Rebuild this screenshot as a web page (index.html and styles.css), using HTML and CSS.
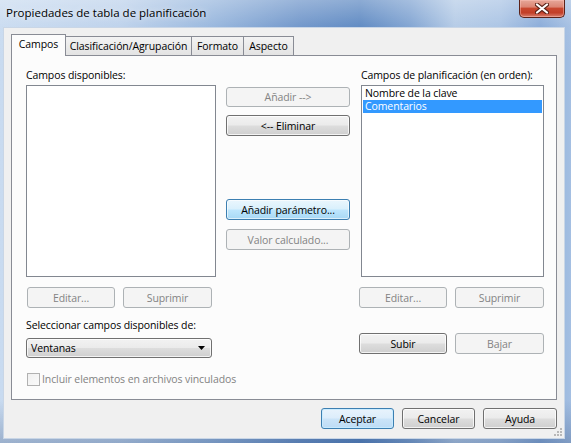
FILE: index.html
```html
<!DOCTYPE html>
<html lang="es">
<head>
<meta charset="utf-8">
<title>Propiedades de tabla de planificación</title>
<link rel="stylesheet" href="styles.css">
</head>
<body>
<div class="window">
  <div class="titlebar">
    <span class="title">Propiedades de tabla de planificación</span>
    <div class="close">
      <svg width="14" height="11" viewBox="0 0 14 11">
        <path d="M2 1.5 L12 9.5 M12 1.5 L2 9.5" stroke="#5a2218" stroke-width="4.2" stroke-linecap="round"/>
        <path d="M2 1.5 L12 9.5 M12 1.5 L2 9.5" stroke="#ffffff" stroke-width="2.2" stroke-linecap="round"/>
      </svg>
    </div>
  </div>
  <div class="client">
    <div class="tabs">
      <div class="tab tab-active tab-w1">Campos</div>
      <div class="tab tab-w2">Clasificación/Agrupación</div>
      <div class="tab tab-w3">Formato</div>
      <div class="tab tab-w4">Aspecto</div>
    </div>
    <div class="panel">
      <div class="col col-left">
        <div class="label">Campos disponibles:</div>
        <div class="listbox list-left"></div>
        <div class="btnrow">
          <button class="btn btn-a" disabled>Editar...</button>
          <button class="btn btn-b" disabled>Suprimir</button>
        </div>
        <div class="label label-gap">Seleccionar campos disponibles de:</div>
        <div class="combo">
          <span>Ventanas</span>
          <svg class="arrow" width="7" height="4" viewBox="0 0 7 4"><path d="M0 0 H7 L3.5 4 Z" fill="#000"/></svg>
        </div>
        <div class="check">
          <span class="box"></span>
          <span class="check-text">Incluir elementos en archivos vinculados</span>
        </div>
      </div>
      <div class="col col-mid">
        <button class="btn mid btn-add" disabled>Añadir --&gt;</button>
        <button class="btn mid btn-del">&lt;-- Eliminar</button>
        <button class="btn mid hot btn-param">Añadir parámetro...</button>
        <button class="btn mid btn-calc" disabled>Valor calculado...</button>
      </div>
      <div class="col col-right">
        <div class="label label-right">Campos de planificación (en orden):</div>
        <div class="listbox list-right">
          <div class="item">Nombre de la clave</div>
          <div class="item selected">Comentarios</div>
        </div>
        <div class="btnrow">
          <button class="btn btn-a0" disabled>Editar...</button>
          <button class="btn btn-b" disabled>Suprimir</button>
        </div>
        <div class="btnrow btnrow-move">
          <button class="btn btn-a0">Subir</button>
          <button class="btn btn-b" disabled>Bajar</button>
        </div>
      </div>
    </div>
    <div class="dlgbuttons">
      <button class="btn dlg default">Aceptar</button>
      <button class="btn dlg">Cancelar</button>
      <button class="btn dlg dlg-last">Ayuda</button>
    </div>
    <svg class="grip" width="9" height="9" viewBox="0 0 9 9">
      <g fill="#b8b8b8">
        <rect x="6" y="0" width="2" height="2"/>
        <rect x="3" y="3" width="2" height="2"/><rect x="6" y="3" width="2" height="2"/>
        <rect x="0" y="6" width="2" height="2"/><rect x="3" y="6" width="2" height="2"/><rect x="6" y="6" width="2" height="2"/>
      </g>
    </svg>
  </div>
</div>
</body>
</html>
```

FILE: styles.css
```css
* { box-sizing: border-box; }

html, body {
  margin: 0;
  padding: 0;
  background: #5d87be;
}

body {
  font-family: "Open Sans", "Noto Sans", "DejaVu Sans", sans-serif;
  font-size: 10.5px;
  letter-spacing: -0.1px;
  color: #000;
}

.window {
  width: 571px;
  height: 443px;
  display: flex;
  flex-direction: column;
  background:
    linear-gradient(180deg, rgba(255,255,255,0.3) 0px, rgba(255,255,255,0.05) 26px, rgba(0,0,0,0) 60px, rgba(0,0,0,0) 400px, rgba(20,50,100,0.25) 443px),
    linear-gradient(90deg, #c9dbf0 0px, #bcd1eb 120px, #97b6dd 210px, #6d94c9 300px, #5b87c1 360px, #7ea2d1 410px, #b3cae6 455px, #a9c3e4 500px, #88aad8 540px, #a4bfe2 571px);
  overflow: hidden;
}

.titlebar {
  height: 27px;
  display: flex;
  align-items: flex-start;
  flex: none;
}

.title {
  padding-left: 6px;
  line-height: 26px;
  font-size: 11.5px;
  letter-spacing: 0;
  color: #000;
  text-shadow: 0 0 6px rgba(255,255,255,0.9);
}

.close {
  margin-left: auto;
  margin-right: 6px;
  width: 46px;
  height: 18px;
  border: 1px solid #5b2219;
  border-top: none;
  border-radius: 0 0 5px 5px;
  background: linear-gradient(180deg, #e6a799 0%, #dc8675 40%, #c8472f 50%, #c23f28 75%, #d8806f 100%);
  box-shadow: inset 0 0 0 1px rgba(255,200,190,0.45);
  display: flex;
  align-items: center;
  justify-content: center;
}

.client {
  position: relative;
  flex: none;
  width: 562px;
  height: 412px;
  margin-left: 3px;
  background: #f0f0f0;
  border: 1px solid #c9d6e6;
  padding: 6px 7px 0 7px;
}

/* Tabs */
.tabs {
  display: flex;
  align-items: flex-end;
  height: 21px;
}

.tab {
  height: 19px;
  border: 1px solid #898c95;
  border-bottom: none;
  background: linear-gradient(180deg, #f3f3f3 0%, #ebebeb 50%, #e3e3e3 100%);
  text-align: center;
  line-height: 19px;
  margin-left: -1px;
  white-space: nowrap;
}

.tab-active {
  position: relative;
  z-index: 1;
  height: 22px;
  margin-bottom: -1px;
  margin-left: 0;
  background: #fcfcfc;
  line-height: 19px;
}

.tab-w1 { width: 55px; }
.tab-w2 { width: 127px; }
.tab-w3 { width: 53px; }
.tab-w4 { width: 51px; }

.panel {
  width: 546px;
  height: 345px;
  border: 1px solid #898c95;
  background: #fcfcfc;
  padding: 12px 0 0 14px;
  display: flex;
  align-items: flex-start;
}

.col {
  display: flex;
  flex-direction: column;
  align-items: flex-start;
}

.col-left { width: 190px; }
.col-mid { width: 124px; margin-left: 10px; }
.col-right { width: 185px; margin-left: 9px; }

.label {
  height: 15px;
  line-height: 15px;
  white-space: nowrap;
}

.label-gap { margin-top: 10px; }
.label-right { padding-left: 2px; }

.listbox {
  margin-top: 2px;
  height: 192px;
  border: 1px solid #828790;
  background: #ffffff;
  padding: 1px;
}

.list-left { width: 190px; }
.list-right { width: 183px; margin-left: 2px; }

.item {
  height: 13px;
  line-height: 13px;
  padding-left: 2px;
  white-space: nowrap;
  overflow: hidden;
}

.item.selected {
  background: #3399ff;
  color: #fff;
}

/* Buttons */
.btn {
  height: 21px;
  padding: 0;
  margin: 0;
  font: inherit;
  letter-spacing: inherit;
  color: #000;
  border: 1px solid #707070;
  border-radius: 3px;
  background: linear-gradient(180deg, #f2f2f2 0%, #ebebeb 48%, #dddddd 52%, #cfcfcf 100%);
  box-shadow: inset 0 0 0 1px rgba(255,255,255,0.75);
  text-align: center;
  line-height: 18px;
  white-space: nowrap;
  -webkit-appearance: none;
  appearance: none;
}

.btn:disabled {
  border-color: #adb2b5;
  background: #f4f4f4;
  color: #838383;
  box-shadow: none;
}

.btn.hot {
  border-color: #3c7fb1;
  background: linear-gradient(180deg, #eaf6fd 0%, #d9f0fc 48%, #bee6fd 52%, #a7d9f5 100%);
  box-shadow: inset 0 0 0 1px rgba(255,255,255,0.6);
}

.btn.default {
  border-color: #3c7fb1;
  background: linear-gradient(180deg, #e8f3fc 0%, #dcedfb 48%, #cbe4f8 52%, #bddcf5 100%);
  box-shadow: inset 0 0 0 1px rgba(200,235,255,0.9);
}

.btnrow {
  display: flex;
  margin-top: 10px;
}

.btnrow-move { margin-top: 25px; }

.btn-a { width: 88px; margin-left: 1px; }
.btn-a0 { width: 88px; }
.btn-b { width: 89px; margin-left: 8px; }

.mid { width: 124px; }
.btn-add { margin-top: 19px; height: 20px; line-height: 17px; }
.btn-del { margin-top: 8px; }
.btn-param { margin-top: 63px; }
.btn-calc { margin-top: 9px; }

/* Combo */
.combo {
  margin-top: 5px;
  width: 186px;
  height: 20px;
  border: 1px solid #707070;
  border-radius: 3px;
  background: linear-gradient(180deg, #f2f2f2 0%, #ebebeb 48%, #dddddd 52%, #cfcfcf 100%);
  box-shadow: inset 0 0 0 1px rgba(255,255,255,0.75);
  display: flex;
  align-items: center;
  padding: 0 6px 0 4px;
  line-height: 17px;
}

.combo .arrow { margin-left: auto; }

/* Checkbox */
.check {
  margin-top: 15px;
  display: flex;
  align-items: center;
  color: #838383;
  white-space: nowrap;
}

.check .box {
  width: 13px;
  height: 13px;
  margin-left: 1px;
  border: 1px solid #b1b1b1;
  background: linear-gradient(135deg, #f0f0f0, #fafafa);
}

.check-text { margin-left: 2px; line-height: 13px; }

/* Dialog buttons */
.dlgbuttons {
  display: flex;
  justify-content: flex-end;
  margin-top: 8px;
  margin-right: -2px;
  width: 546px;
}

.dlg { width: 73px; margin-left: 8px; }
.dlg-last { width: 74px; }

.grip {
  position: absolute;
  right: 1px;
  bottom: 1px;
}
```
